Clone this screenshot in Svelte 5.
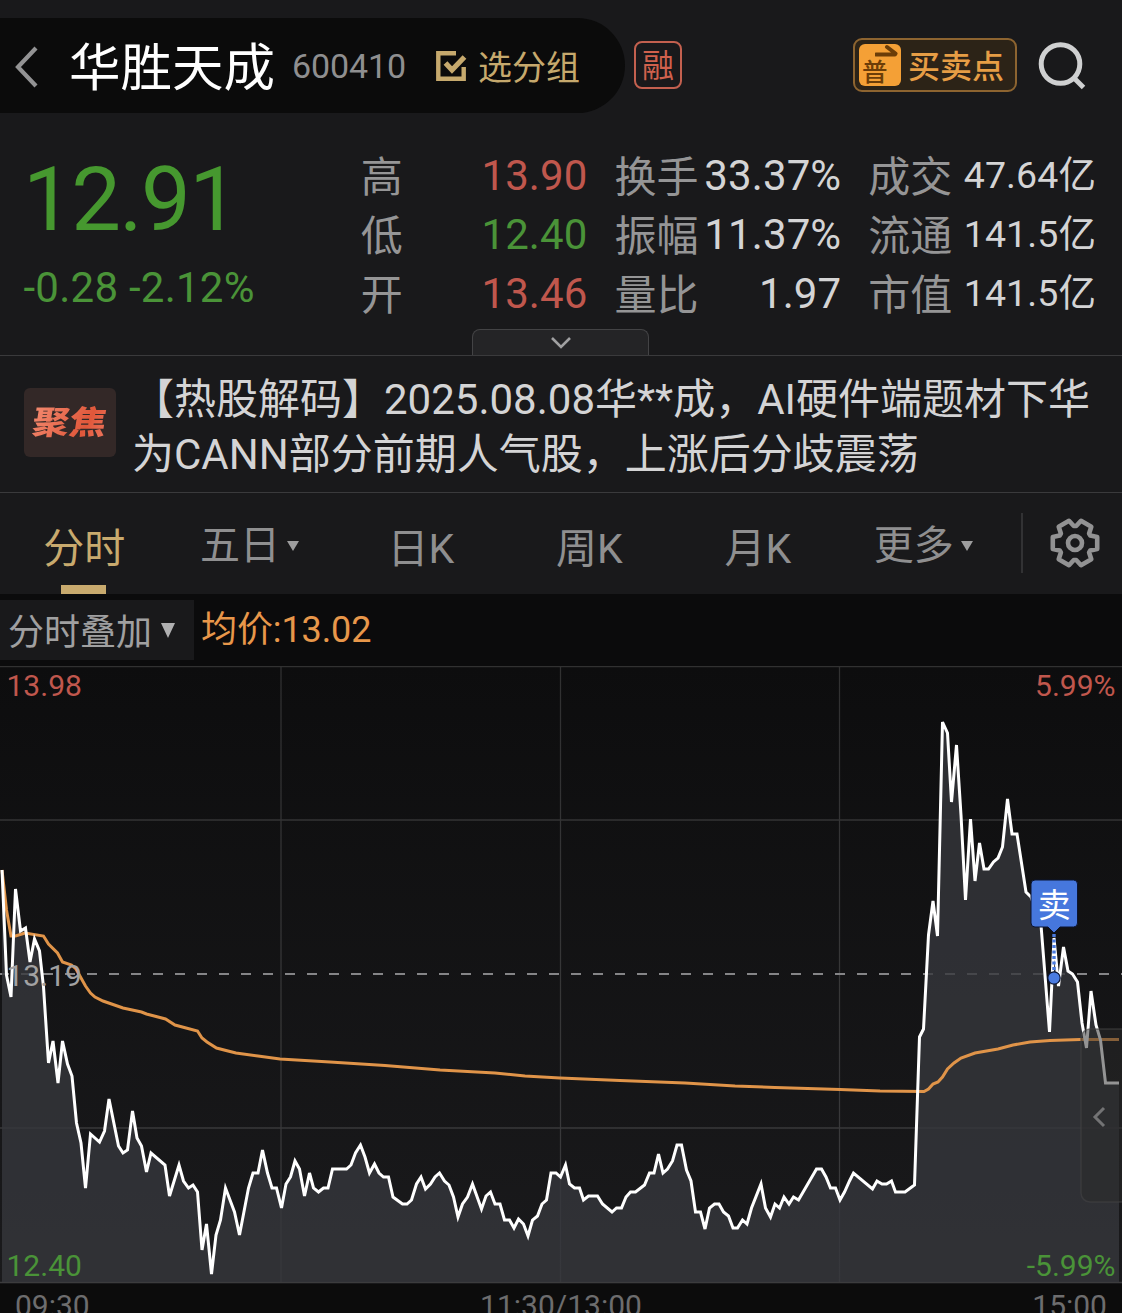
<script lang="ts">
	const stats = [
		[
			{ label: '高', value: '13.90', tone: 'up' },
			{ label: '低', value: '12.40', tone: 'down' },
			{ label: '开', value: '13.46', tone: 'up' },
		],
		[
			{ label: '换手', value: '33.37%', tone: '' },
			{ label: '振幅', value: '11.37%', tone: '' },
			{ label: '量比', value: '1.97', tone: '' },
		],
		[
			{ label: '成交', value: '47.64亿', tone: 'small' },
			{ label: '流通', value: '141.5亿', tone: 'small' },
			{ label: '市值', value: '141.5亿', tone: 'small' },
		],
	];

	const tabs = [
		{ name: '分时', active: true, menu: false },
		{ name: '五日', active: false, menu: true },
		{ name: '日K', active: false, menu: false },
		{ name: '周K', active: false, menu: false },
		{ name: '月K', active: false, menu: false },
		{ name: '更多', active: false, menu: true },
	];

	// minute price line, chart coordinates
	const price =
		'2,870 6.5,975 11,997 15.5,889 20.5,931 25.5,928 30,962 34.5,939 39.5,951 43.5,987 48.5,1063 53,1041 58,1083 62.5,1041 67.5,1064 72,1076 76.5,1123 81,1143 85.5,1188 90.5,1134 99.5,1142 104.5,1131 109,1099 118.5,1146 123,1153 127.5,1150 132.5,1111 137,1138 141.5,1146 146.5,1172 151,1153 165,1165 169.5,1196 179,1165 183.5,1181 188.5,1188 193,1185 197.5,1192 202,1250 206.5,1224 211.5,1274 216,1235 220.5,1220 225.5,1188 234.5,1212 239.5,1235 248.5,1188 253,1173 258,1173 262.5,1150 267.5,1173 272,1188 276.5,1188 ' +
		'281.5,1208 286,1184 290.5,1177 295,1161 299.5,1169 304.5,1196 309.5,1173 313.5,1188 318.5,1192 323.5,1188 328,1188 332.5,1169 346.5,1169 351,1165 355.5,1153 360.5,1145 365,1157 369.5,1173 374.5,1164 379,1173 383.5,1177 388.5,1177 393,1197 402.5,1204 407,1204 411.5,1200 416.5,1184 421,1177 425.5,1189 430.5,1184 435,1177 439.5,1173 444.5,1181 449,1185 453.5,1197 458,1217 462.5,1204 467.5,1197 472.5,1184 481.5,1209 486,1196 490.5,1192 495,1204 500,1204 504.5,1220 509.5,1220 514,1228 518.5,1219 523.5,1224 528,1236 532.5,1220 537.5,1216 542,1204 546.5,1200 551,1173 556,1173 560.5,1177 565.5,1165 569.5,1184 574.5,1188 579.5,1188 583.5,1200 588.5,1196 597.5,1196 ' +
		'602.5,1204 612,1212 616.5,1208 621.5,1208 626,1197 630.5,1192 635.5,1192 644.5,1185 649.5,1173 654,1173 658.5,1154 663,1173 667.5,1169 672.5,1161 677,1145 681.5,1145 686.5,1170 691,1181 695.5,1212 700.5,1212 705,1229 709.5,1208 714.5,1204 719,1204 723.5,1212 728.5,1216 733,1228 737.5,1228 742.5,1220 747,1224 751.5,1208 761,1184 765.5,1208 770.5,1217 775,1204 779.5,1208 784,1197 789,1204 793.5,1197 798.5,1200 816.5,1169 821.5,1169 826,1177 830.5,1188 835.5,1188 840,1200 844.5,1192 849.5,1181 853.5,1173 872.5,1189 877,1181 882,1184 886.5,1184 891.5,1181 895.5,1192 905,1192 914.5,1185 ' +
		'919.5,1037 923.5,1029 928.5,935 933,901 937.5,936 942.5,722 947.5,733 951.5,802 956.5,745 961,815 965.5,900 970.5,819 975,881 979.5,843 984,869 988.5,869 993.5,862 998,858 1002.5,847 1007.5,799 1012,834 1017,834 1026,892 1031,897 1041,925 1049.5,1032 1054,938 1058.5,986 1063.5,947 1068,971 1072.5,974 1077.5,982 1082,1023 1086.5,1048 1091,991 1096,1025 1100.5,1040 1105.5,1083 1119,1083';

	const average =
		'2,870 6.5,910 11,936 15.5,936 25,933 43.5,936 48.5,944 57.5,953 62.5,962 71.5,965 76,969 85.5,986 90.5,993 95,997 103,1001 123,1008 141.5,1012 146.5,1014 165.5,1019 175,1025 197.5,1031 202,1038 207,1042 216.5,1048 228,1051 236,1053 258,1056 280,1059 330,1062 385,1065.5 440,1070 495,1073 525,1076 560,1078 620,1080.5 685,1083 735,1086 775,1087.5 840,1089.5 880,1091 924,1091.5 928.5,1089 933,1084 938,1082 942.5,1077 947.5,1069 954,1063 961,1058 975,1053 998,1049 1013,1045 1030,1042 1050,1040.5 1080,1039.5 1119,1039.5';

	// six-toothed gear outline around 0,0
	const gear = [0, 60, 120, 180, 240, 300]
		.flatMap((a) => [[a - 15, 23], [a + 15, 23], [a + 26, 17], [a + 34, 17]])
		.map(([deg, r]) => {
			const t = (deg * Math.PI) / 180;
			return `${(r * Math.cos(t)).toFixed(1)},${(r * Math.sin(t)).toFixed(1)}`;
		})
		.join(' ');
</script>

<div class="page">
	<header>
		<div class="pill">
			<svg class="back" width="24" height="44" viewBox="0 0 24 44">
				<path d="M22 3 4 22 22 41" />
			</svg>
			<span class="name">华胜天成</span>
			<span class="code">600410</span>
			<svg class="check" width="32" height="32" viewBox="0 0 32 32">
				<path d="M21 3.3H3.3V28.7H28.7V17" stroke-width="4.4" />
				<path d="M10.5 13 17 20 29.5 7" stroke-width="5.2" />
			</svg>
			<span class="group">选分组</span>
		</div>
		<span class="margin-tag">融</span>
		<div class="trade">
			<div class="trade-icon">
				<svg width="24" height="14" viewBox="0 0 24 14">
					<path d="M1 10.5H20M12 3 20.5 9.5" />
				</svg>
				<span>普</span>
			</div>
			<span class="trade-text">买卖点</span>
		</div>
		<svg class="search" width="50" height="50" viewBox="0 0 50 50">
			<circle cx="22.5" cy="23" r="19.3" />
			<path d="M36 37 45.5 46.5" />
		</svg>
	</header>

	<section class="quote">
		<div class="quote-row">
			<div class="last">
				<div class="last-price">12.91</div>
				<div class="change">-0.28 -2.12%</div>
			</div>
			{#each stats as col}
				<div class="stat-col">
					{#each col as s}
						<div class="stat">
							<span class="label">{s.label}</span>
							<span class="value {s.tone}">{s.value}</span>
						</div>
					{/each}
				</div>
			{/each}
		</div>
		<div class="expand">
			<svg width="22" height="14" viewBox="0 0 22 14"><path d="M2 2 11 11 20 2" /></svg>
		</div>
	</section>

	<section class="news">
		<div class="focus"><span>聚焦</span></div>
		<p>【热股解码】2025.08.08华**成，AI硬件端题材下华<br />为CANN部分前期人气股，上涨后分歧震荡</p>
	</section>

	<nav>
		{#each tabs as t}
			<div class="tab" class:active={t.active} class:menu={t.menu}>
				<span>{t.name}</span>
				{#if t.menu}<i></i>{/if}
			</div>
		{/each}
		<div class="settings">
			<svg width="54" height="54" viewBox="-27 -27 54 54">
				<polygon points={gear} />
				<circle r="7" />
			</svg>
		</div>
	</nav>

	<div class="toolbar">
		<div class="overlay-btn"><span>分时叠加</span><i></i></div>
		<span class="avg">均价:13.02</span>
	</div>

	<svg class="chart" width="1122" height="618" viewBox="0 666 1122 618">
		<defs>
			<linearGradient id="bg" x1="0" y1="0" x2="0" y2="1">
				<stop offset="0" stop-color="#0d0d0e" />
				<stop offset="1" stop-color="#1a1a1c" />
			</linearGradient>
		</defs>
		<rect x="0" y="666" width="1122" height="617" fill="url(#bg)" />
		<path class="grid" d="M0 666.5H1122M0 820H1122M0 1128H1122M0 1282.3H1122M281 666V1282M560.5 666V1282M839.5 666V1282" />
		<path class="prev-close" d="M-1 974H1122" />
		<polygon class="area" points="2,1282 {price} 1119,1282" />
		<polyline class="avg-line" points={average} />
		<polyline class="price-line" points={price} />

		<text class="up" x="6.5" y="696">13.98</text>
		<text class="up" x="1115.5" y="696" text-anchor="end">5.99%</text>
		<text class="mid" x="6.5" y="986">13.19</text>
		<text class="down" x="6.5" y="1276">12.40</text>
		<text class="down" x="1115.5" y="1276" text-anchor="end">-5.99%</text>

		<!-- sell marker -->
		<path class="pin-line" d="M1054 934V974" />
		<circle class="pin-dot" cx="1054" cy="978" r="6.2" />
		<path class="pin" d="M1035 880H1073.5a4 4 0 0 1 4 4V923a4 4 0 0 1-4 4H1060L1054 933 1048 927H1035a4 4 0 0 1-4-4V884a4 4 0 0 1 4-4Z" />
		<text class="pin-text" x="1054.3" y="916.5" text-anchor="middle">卖</text>

		<!-- drawer handle -->
		<path class="drawer" d="M1122 1029H1090a9 9 0 0 0-9 9V1193a9 9 0 0 0 9 9H1122" />
		<path class="drawer-arrow" d="M1104 1108 1095 1117 1104 1126" />
	</svg>

	<div class="axis">
		<span>09:30</span>
		<span>11:30/13:00</span>
		<span>15:00</span>
	</div>
</div>

<style>
	:global(body) {
		background: #19191b;
	}

	.page {
		width: 1122px;
		height: 1313px;
		overflow: hidden;
		background: #19191b;
		color: #d4d4d5;
		font-family: Roboto, 'Noto Sans CJK SC', sans-serif;
	}

	svg {
		display: block;
		flex-shrink: 0;
		fill: none;
	}

	header {
		display: flex;
		align-items: center;
		height: 95px;
		padding-top: 18px;
	}
	.pill {
		display: flex;
		align-items: center;
		width: 625px;
		height: 95px;
		box-sizing: border-box;
		padding-left: 14px;
		background: #0b0b0b;
		border-radius: 0 48px 48px 0;
		white-space: nowrap;
	}
	.back { stroke: #939394; stroke-width: 4.2; margin-top: 3px; }
	.name {
		width: 223px;
		margin-left: 31px;
		padding-top: 7px;
		color: #fff;
		font-size: 51.5px;
		line-height: 80px;
	}
	.code {
		width: 143px;
		color: #8f8f90;
		font-size: 34px;
		letter-spacing: -0.1px;
	}
	.check { stroke: #c6a96d; }
	.group {
		margin-left: 11px;
		color: #c6a96d;
		font-size: 34px;
	}
	.margin-tag {
		width: 44px;
		height: 44px;
		margin: 0 0 2px 9px;
		border: 2px solid #c3604f;
		border-radius: 8px;
		color: #d0614d;
		font-size: 32px;
		line-height: 47px;
		text-align: center;
	}
	.trade {
		display: flex;
		align-items: center;
		width: 164px;
		height: 54px;
		margin: 0 0 2px 171px;
		box-sizing: border-box;
		padding-left: 4px;
		background: #2c2317;
		border: 2px solid #8d6430;
		border-radius: 9px;
		color: #e69d45;
	}
	.trade-icon {
		width: 42px;
		height: 42px;
		box-sizing: border-box;
		background: #f4a036;
		border-radius: 6px;
		color: #6b3d08;
		font-size: 25.5px;
		font-weight: 500;
		line-height: 29px;
	}
	.trade-icon svg { margin-left: 16px; stroke: #6b3d08; stroke-width: 4; stroke-linecap: round; }
	.trade-icon span { display: block; margin-left: 3px; }
	.trade-text {
		margin-left: 7px;
		padding-top: 4px;
		font-size: 32px;
		font-weight: 500;
		line-height: 48px;
		white-space: nowrap;
	}
	.search {
		margin-left: 21px;
		stroke: #cfd0d1;
		stroke-width: 5;
	}

	.quote {
		height: 242px;
		border-bottom: 1px solid #3a3a3c;
	}
	.quote-row {
		display: flex;
		height: 183px;
		padding-top: 33px;
	}
	.last { width: 361px; white-space: nowrap; color: #46982f; }
	.last-price {
		padding-left: 23px;
		font-size: 88.5px;
		line-height: 109px;
		letter-spacing: -1.6px;
	}
	.change {
		padding-left: 23.5px;
		font-size: 42px;
		line-height: 65px;
		letter-spacing: 0.25px;
		color: #4a9338;
	}
	.stat-col { width: 226.5px; margin-right: 27.5px; }
	.stat {
		display: flex;
		justify-content: space-between;
		height: 59px;
		line-height: 60px;
		font-size: 42px;
		white-space: nowrap;
	}
	.label { padding-top: 2px; color: #959596; }
	.value { letter-spacing: 0.1px; margin-right: -0.5px; }
	.up { color: #c0574d; fill: #c0574d; }
	.down { color: #4a9338; fill: #4a9338; }
	.small { margin-right: -1.5px; font-size: 37.5px; line-height: 58px; }
	.expand {
		display: flex;
		align-items: center;
		justify-content: center;
		width: 175px;
		height: 25px;
		margin: 0 0 0 472px;
		background: #242426;
		border: 1px solid #434345;
		border-bottom: 0;
		border-radius: 8px 8px 0 0;
	}
	.expand svg { stroke: #a0a0a1; stroke-width: 2.6; }

	.news {
		display: flex;
		height: 136px;
		border-bottom: 1px solid #3a3a3c;
	}
	.focus {
		width: 92px;
		height: 69px;
		margin: 32px 16px 0 24px;
		background: #332827;
		border-radius: 6px;
		line-height: 64px;
		text-align: center;
	}
	.focus span {
		display: inline-block;
		background: linear-gradient(110deg, #f48e74, #e0573a 70%, #f07a62);
		background-clip: text;
		-webkit-background-clip: text;
		color: transparent;
		font-family: 'Noto Sans CJK SC', sans-serif;
		font-size: 37px;
		font-weight: 900;
		transform: skewX(-9deg) scaleY(0.88);
	}
	.news p {
		margin: 16px 0 0;
		font-size: 42px;
		line-height: 55px;
		white-space: nowrap;
	}

	nav {
		display: flex;
		height: 101px;
		color: #8f8f90;
	}
	.tab {
		position: relative;
		display: flex;
		align-items: center;
		justify-content: center;
		width: 168.4px;
		padding-top: 10px;
		box-sizing: border-box;
		font-size: 41px;
		line-height: 60px;
	}
	.tab.menu { padding-top: 5px; font-size: 40px; }
	.tab.menu span { margin-left: -6px; }
	.tab i {
		margin-left: 7px;
		border: 6.5px solid transparent;
		border-top: 10px solid #9d9d9e;
		border-bottom: 0;
	}
	.tab.active { color: #c8aa6e; }
	.tab.active::after {
		content: '';
		position: absolute;
		bottom: 0;
		left: 61px;
		width: 45px;
		height: 9px;
		background: #c8aa6e;
	}
	.settings {
		height: 60px;
		margin: 20px 0 0 10.5px;
		padding: 3px 0 0 25px;
		box-sizing: border-box;
		border-left: 2px solid #323234;
	}
	.settings svg { stroke: #929293; stroke-width: 4.6; stroke-linejoin: round; }

	.toolbar {
		display: flex;
		height: 72px;
		box-sizing: border-box;
		padding-top: 6px;
		background: #0b0b0c;
		font-size: 36px;
		line-height: 62px;
		white-space: nowrap;
	}
	.overlay-btn {
		display: flex;
		align-items: center;
		width: 194px;
		height: 60px;
		box-sizing: border-box;
		padding-left: 8px;
		background: #19191b;
		color: #a0a0a1;
	}
	.overlay-btn span { padding-top: 5px; }
	.overlay-btn i {
		margin-left: 9px;
		border: 7.5px solid transparent;
		border-top: 15px solid #b0b0b1;
		border-bottom: 0;
	}
	.avg { margin-left: 7px; line-height: 61px; letter-spacing: -0.1px; color: #e8974a; }

	.chart text {
		font-size: 30px;
	}
	.grid { stroke: #ffffff; stroke-opacity: 0.15; stroke-width: 1.3; }
	.area { fill: #36373c; fill-opacity: 0.8; }
	.prev-close { stroke: #858587; stroke-width: 1.8; stroke-dasharray: 10 12; }
	.avg-line { stroke: #e09449; stroke-width: 3; }
	.price-line { stroke: #fff; stroke-width: 3; }
	.mid { fill: #a2a2a3; }
	.pin-line { stroke: #4a7be0; stroke-width: 3.4; stroke-dasharray: 3 2.5; }
	.pin-dot { fill: #4a7be0; stroke: #0b1430; stroke-width: 1.2; }
	.pin { fill: #4677dd; stroke: #0b1430; stroke-width: 1; }
	.chart .pin-text { fill: #fff; font-size: 33px; }
	.drawer { fill: #29292a; fill-opacity: 0.5; stroke: #434344; stroke-opacity: 0.6; stroke-width: 1.5; }
	.drawer-arrow { stroke: #737374; stroke-width: 3; }

	.axis {
		display: flex;
		justify-content: space-between;
		height: 29px;
		padding: 0 15px;
		background: #0c0c0c;
		color: #6d6d6e;
		font-size: 30px;
		line-height: 44px;
	}
</style>
